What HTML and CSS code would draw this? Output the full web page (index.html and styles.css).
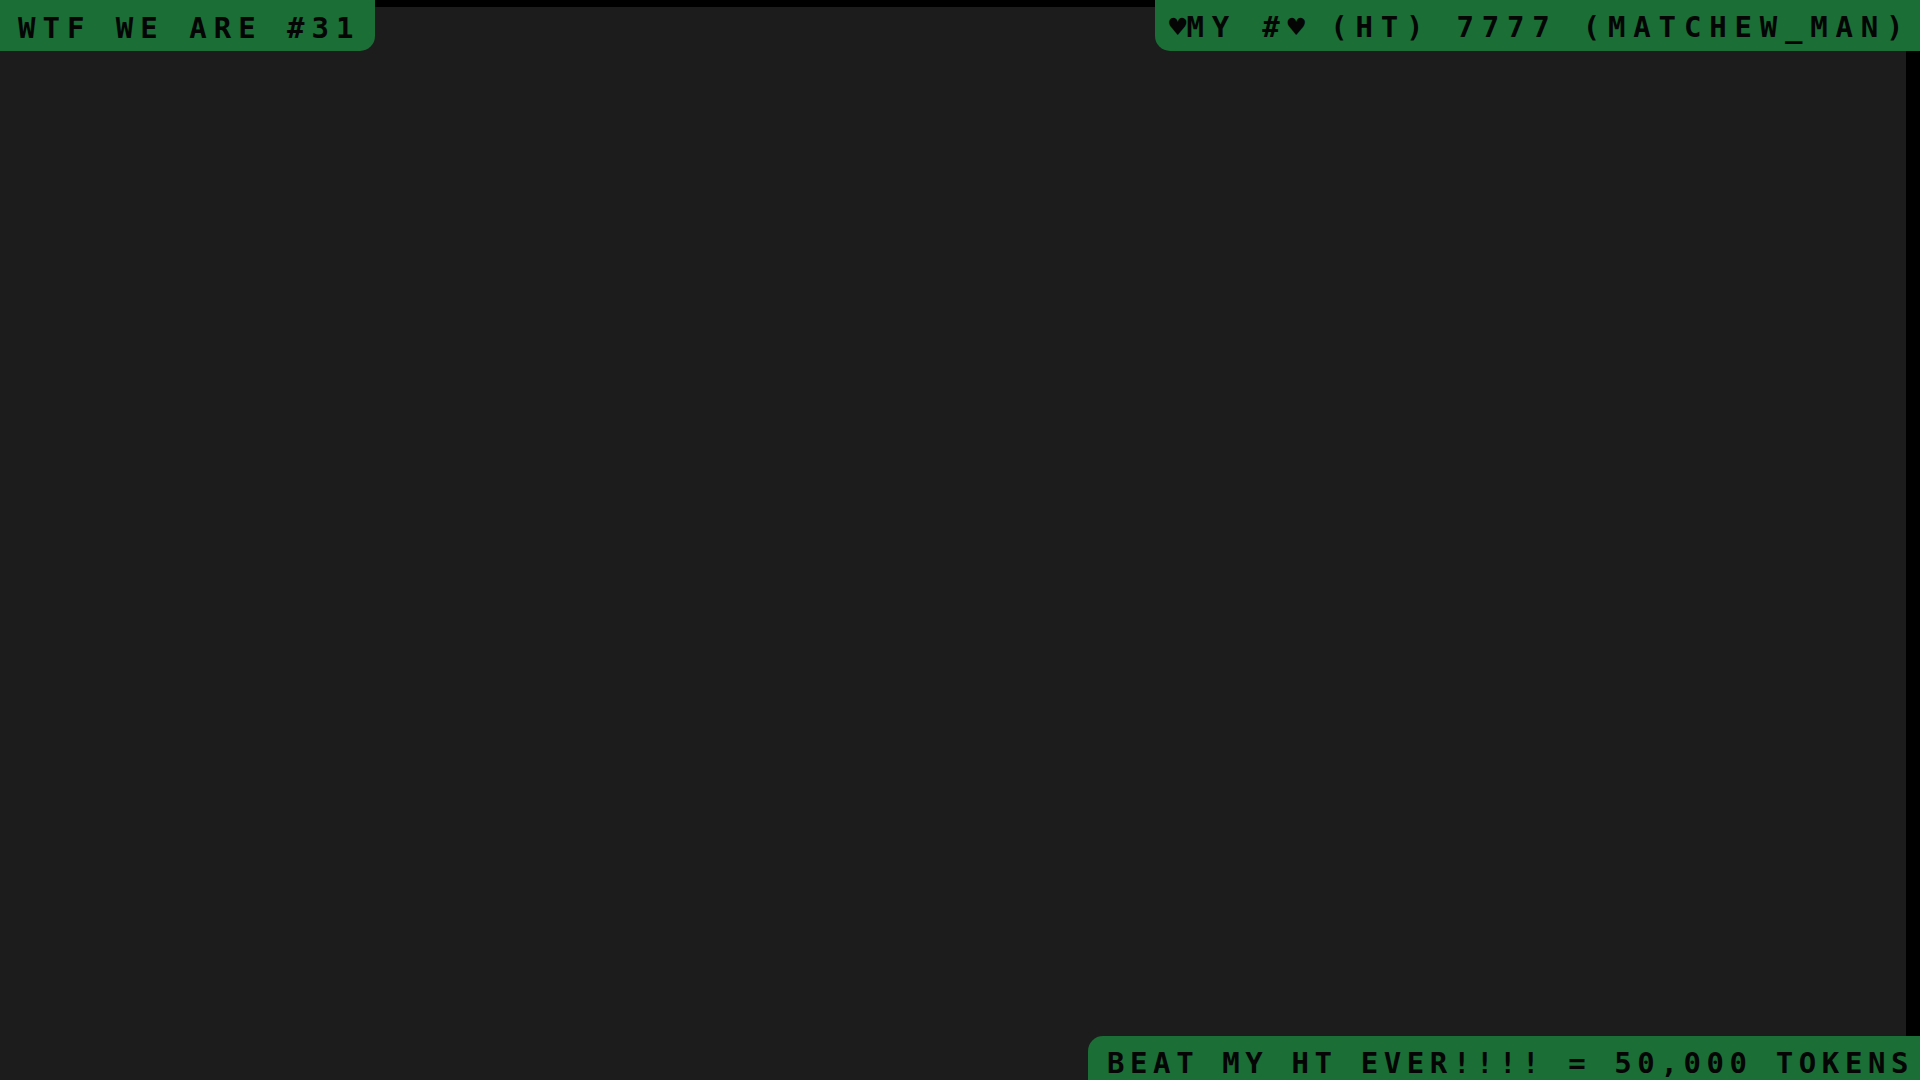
FILE: index.html
```html
<!DOCTYPE html>
<html>
<head>
<meta charset="utf-8">
<link rel="stylesheet" href="styles.css">
</head>
<body>
<div class="page">
  <div class="top-row">
    <div class="tag tag-left">WTF WE ARE #31</div>
    <div class="top-band"></div>
    <div class="tag tag-right"><span class="heart">♥</span>MY #<span class="heart">♥</span> (HT) 7777 (MATCHEW_MAN)</div>
  </div>
  <div class="middle">
    <div class="stage"></div>
    <div class="side-strip"></div>
  </div>
  <div class="bottom-row">
    <div class="tag tag-bottom">BEAT MY HT EVER!!!! = 50,000 TOKENS</div>
  </div>
</div>
</body>
</html>
```

FILE: styles.css
```css
html, body {
  margin: 0;
  padding: 0;
  background: #1c1c1c;
}
.page {
  width: 1920px;
  height: 1080px;
  display: flex;
  flex-direction: column;
  overflow: hidden;
}
.top-row {
  height: 51px;
  display: flex;
  flex-direction: row;
}
.top-band {
  flex: 1;
  height: 7px;
  background: #000;
}
.tag {
  background: #1b6e35;
  color: #050505;
  font-family: "DejaVu Sans Mono", "Liberation Mono", monospace;
  font-weight: bold;
  font-size: 29px;
  line-height: 1.164;
  letter-spacing: 7px;
  white-space: nowrap;
  box-sizing: border-box;
}
.tag-left {
  width: 375px;
  height: 51px;
  padding: 12px 0 0 18px;
  border-bottom-right-radius: 15px;
}
.tag-right {
  width: 765px;
  height: 51px;
  padding: 11px 0 0 14px;
  border-bottom-left-radius: 15px;
  letter-spacing: 7.8px;
}
.heart {
  letter-spacing: 0;
}
.middle {
  flex: 1;
  display: flex;
  flex-direction: row;
}
.stage {
  flex: 1;
}
.side-strip {
  width: 14px;
  background: #000;
}
.bottom-row {
  height: 44px;
  display: flex;
  justify-content: flex-end;
}
.tag-bottom {
  width: 832px;
  height: 44px;
  padding: 11px 0 0 19px;
  border-top-left-radius: 15px;
  letter-spacing: 5.6px;
}
```
